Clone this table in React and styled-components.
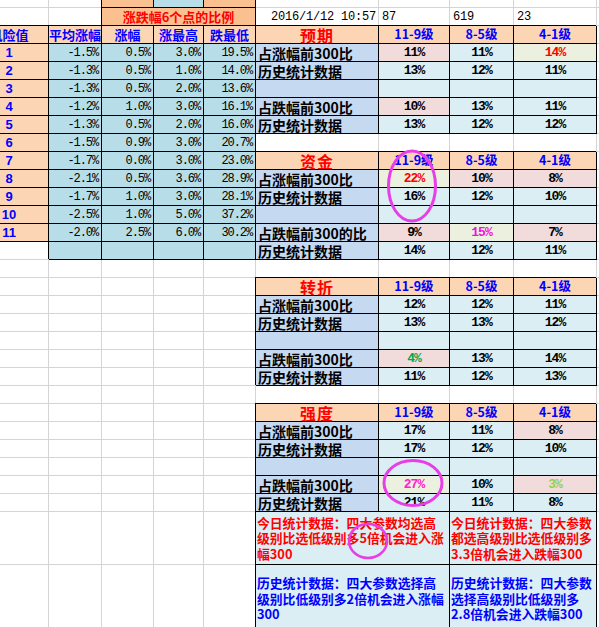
import React from 'react';
import styled, { createGlobalStyle } from 'styled-components';

const CJK = '"Noto Sans CJK SC", "Noto Sans", sans-serif';
const MONO = '"Liberation Mono", "Noto Sans CJK SC", monospace';
const SANS = '"Liberation Sans", "Noto Sans CJK SC", sans-serif';

const ORANGE = '#fac090';
const PEACH = '#fcd5b4';
const TEAL = '#b7dee8';
const CYAN = '#daeef3';
const PINK = '#f2dcdb';
const OLIVE = '#ebf1de';
const LAVENDER = '#c5d9f1';
const RED = '#ff0000';
const BLUE = '#0000ff';

const GlobalStyle = createGlobalStyle`
  html, body {
    margin: 0;
    padding: 0;
    background: #fff;
    overflow: hidden;
  }
`;

const Page = styled.div`
  position: relative;
  width: 599px;
  height: 627px;
  overflow: hidden;
`;

const Sheet = styled.div`
  display: grid;
  grid-template-columns: 79px 53px 52px 50px 52px 123px 71px 64px 83px 80px;
  grid-template-rows: 8px repeat(28, 18px) 53px 68px;
  margin-left: -30px;
  width: max-content;
`;

const JUSTIFY = { left: 'flex-start', center: 'center', right: 'flex-end' };

const Cell = styled.div`
  box-sizing: border-box;
  min-width: 0;
  grid-column: span ${p => p.$span || 1};
  display: flex;
  align-items: center;
  justify-content: ${p => JUSTIFY[p.$align || 'left']};
  padding: 0 ${p => p.$pad ?? 2}px;
  white-space: nowrap;
  line-height: 1;
  background: ${p => p.$bg || '#fff'};
  border-right: 1px solid ${p => (p.$boxed ? '#000' : '#d4d4d4')};
  border-bottom: 1px solid ${p => (p.$boxed ? '#000' : '#d4d4d4')};
  box-shadow: ${p => (p.$boxed ? '-1px -1px 0 #000' : 'none')};
`;

const SheetTitle = styled.span`
  color: ${RED};
  font: bold 13px/1 ${CJK};
`;

const ColHead = styled.span`
  color: ${BLUE};
  font: bold 13px/1 ${CJK};
`;

const RowIdx = styled.span`
  color: ${BLUE};
  font: bold 13px/1 ${SANS};
`;

const Num = styled.span`
  color: #000;
  font: 12px/1 ${MONO};
  letter-spacing: -1.1px;
  margin-right: 1px;
`;

const Stamp = styled.span`
  color: #000;
  font: 12px/1 ${MONO};
  letter-spacing: -0.2px;
`;

const BlockTitle = styled.span`
  color: ${RED};
  font: bold 16px/1 ${CJK};
  letter-spacing: 1px;
`;

const GradeHead = styled.span`
  color: ${BLUE};
  font: bold 12.5px/1 ${CJK};
`;

const RowLabel = styled.span`
  color: #000;
  font: bold 14px/1 ${CJK};
`;

const Pct = styled.span`
  color: ${p => p.$color || '#000'};
  font: bold 13px/1 ${MONO};
  letter-spacing: -1px;
`;

const Note = styled.div`
  color: ${p => p.$color};
  font: bold 12.8px/15.5px ${CJK};
  white-space: nowrap;
`;

const Marks = styled.svg`
  position: absolute;
  inset: 0;
  pointer-events: none;
`;

const HEADS = ['风险值', '平均涨幅', '涨幅', '涨最高', '跌最低'];

const RISK = [
  ['1', '-1.5%', '0.5%', '3.0%', '19.5%'],
  ['2', '-1.3%', '0.5%', '1.0%', '14.0%'],
  ['3', '-1.3%', '0.5%', '2.0%', '13.6%'],
  ['4', '-1.2%', '1.0%', '3.0%', '16.1%'],
  ['5', '-1.3%', '0.5%', '2.0%', '16.0%'],
  ['6', '-1.5%', '0.9%', '3.0%', '20.7%'],
  ['7', '-1.7%', '0.0%', '3.0%', '23.0%'],
  ['8', '-2.1%', '0.5%', '3.6%', '28.9%'],
  ['9', '-1.7%', '1.0%', '3.0%', '28.1%'],
  ['10', '-2.5%', '1.0%', '5.0%', '37.2%'],
  ['11', '-2.0%', '2.5%', '6.0%', '30.2%'],
];

const GRADES = ['11-9级', '8-5级', '4-1级'];
const EMPTY = ['', '', ''];

// each value: text, or [text, background, colour]
const BLOCKS = [
  {
    start: 3,
    title: '预期',
    rows: [
      ['占涨幅前300比', [['11%', PINK], '11%', ['14%', OLIVE, RED]]],
      ['历史统计数据', ['13%', '12%', '11%']],
      ['', EMPTY],
      ['占跌幅前300比', [['10%', PINK], '13%', '11%']],
      ['历史统计数据', ['13%', '12%', '12%']],
    ],
  },
  {
    start: 10,
    title: '资金',
    rows: [
      ['占涨幅前300比', [['22%', OLIVE, RED], ['10%', PINK], ['8%', PINK]]],
      ['历史统计数据', ['16%', '12%', '10%']],
      ['', EMPTY],
      ['占跌幅前300的比', [['9%', PINK], ['15%', OLIVE, '#ee11dd'], ['7%', PINK]]],
      ['历史统计数据', ['14%', '12%', '11%']],
    ],
  },
  {
    start: 17,
    title: '转折',
    rows: [
      ['占涨幅前300比', ['12%', '12%', '11%']],
      ['历史统计数据', ['13%', '13%', '12%']],
      ['', EMPTY],
      ['占跌幅前300比', [['4%', PINK, '#00a84f'], '13%', '14%']],
      ['历史统计数据', ['11%', '12%', '13%']],
    ],
  },
  {
    start: 24,
    title: '强度',
    rows: [
      ['占涨幅前300比', ['17%', '11%', ['8%', PINK]]],
      ['历史统计数据', ['17%', '12%', '10%']],
      ['', EMPTY],
      ['占跌幅前300比', [['27%', OLIVE, '#ff22cc'], '10%', ['3%', PINK, '#92d050']]],
      ['历史统计数据', ['21%', '11%', '8%']],
    ],
  },
];

const NOTES = [
  {
    color: RED,
    cells: [
      ['今日统计数据：四大参数均选高', '级别比选低级别多5倍机会进入涨', '幅300'],
      ['今日统计数据：四大参数', '都选高级别比选低级别多', '3.3倍机会进入跌幅300'],
    ],
  },
  {
    color: BLUE,
    cells: [
      ['历史统计数据：四大参数选择高', '级别比低级别多2倍机会进入涨幅', '300'],
      ['历史统计数据：四大参数', '选择高级别比低级别多', '2.8倍机会进入跌幅300'],
    ],
  },
];

const blanks = (n, prefix) =>
  Array.from({ length: n }, (_, i) => <Cell key={prefix + i} />);

function leftCells(r) {
  if (r === 1) {
    return [
      ...blanks(2, 'l'),
      <Cell key="c" $boxed $bg={ORANGE} />,
      <Cell key="d" $boxed $bg={TEAL} />,
      <Cell key="e" $boxed $bg={ORANGE} />,
    ];
  }
  if (r === 2) {
    return [
      ...blanks(2, 'l'),
      <Cell key="t" $span={3} $boxed $bg={ORANGE} $align="center">
        <SheetTitle>涨跌幅6个点的比例</SheetTitle>
      </Cell>,
    ];
  }
  if (r === 3) {
    return HEADS.map(h => (
      <Cell key={h} $boxed $bg={PEACH} $align="center" $pad={0}>
        <ColHead>{h}</ColHead>
      </Cell>
    ));
  }
  if (r >= 4 && r <= 14) {
    const [idx, ...vals] = RISK[r - 4];
    return [
      <Cell key="a" $boxed $bg={PEACH} $align="center">
        <RowIdx>{idx}</RowIdx>
      </Cell>,
      ...vals.map((v, j) => (
        <Cell key={j} $boxed $bg={TEAL} $align="right">
          <Num>{v}</Num>
        </Cell>
      )),
    ];
  }
  if (r === 15) {
    return [
      <Cell key="a" />,
      ...[0, 1, 2, 3].map(j => <Cell key={j} $boxed $bg={TEAL} />),
    ];
  }
  return blanks(5, 'l');
}

function rightCells(r) {
  if (r === 2) {
    return [
      <Cell key="f" $align="right">
        <Stamp>2016/1/12 10:57</Stamp>
      </Cell>,
      <Cell key="g" $pad={3}><Stamp>87</Stamp></Cell>,
      <Cell key="h" $pad={3}><Stamp>619</Stamp></Cell>,
      <Cell key="i" $pad={3}><Stamp>23</Stamp></Cell>,
    ];
  }
  const block = BLOCKS.find(b => r >= b.start && r < b.start + 6);
  if (block) {
    const i = r - block.start;
    if (i === 0) {
      return [
        <Cell key="f" $boxed $bg={PEACH} $align="center">
          <BlockTitle>{block.title}</BlockTitle>
        </Cell>,
        ...GRADES.map(g => (
          <Cell key={g} $boxed $bg={PEACH} $align="center">
            <GradeHead>{g}</GradeHead>
          </Cell>
        )),
      ];
    }
    const [label, vals] = block.rows[i - 1];
    return [
      <Cell key="f" $boxed $bg={LAVENDER}>
        <RowLabel>{label}</RowLabel>
      </Cell>,
      ...vals.map((v, j) => {
        const [text, bg = CYAN, color] = Array.isArray(v) ? v : [v];
        return (
          <Cell key={j} $boxed $bg={bg} $align="center">
            <Pct $color={color}>{text}</Pct>
          </Cell>
        );
      }),
    ];
  }
  if (r === 30 || r === 31) {
    const note = NOTES[r - 30];
    return note.cells.map((lines, j) => (
      <Cell key={j} $span={2} $boxed $bg={CYAN} $pad={1}>
        <Note $color={note.color}>
          {lines.map((ln, k) => (
            <React.Fragment key={k}>
              {k > 0 && <br />}
              {ln}
            </React.Fragment>
          ))}
        </Note>
      </Cell>
    ));
  }
  return blanks(4, 'r');
}

export default function App() {
  const rows = Array.from({ length: 31 }, (_, i) => i + 1);
  return (
    <Page>
      <GlobalStyle />
      <Sheet>
        {rows.map(r => (
          <React.Fragment key={r}>
            {leftCells(r)}
            {rightCells(r)}
            <Cell />
          </React.Fragment>
        ))}
      </Sheet>
      <Marks width="599" height="627" viewBox="0 0 599 627">
        <g fill="none" stroke="#e83ee8">
          <ellipse cx="412" cy="186" rx="23.5" ry="35" strokeWidth="3" />
          <ellipse cx="413" cy="483" rx="29" ry="22.5" strokeWidth="3" />
          <ellipse cx="368" cy="541" rx="19" ry="17" strokeWidth="2.5" />
        </g>
      </Marks>
    </Page>
  );
}
